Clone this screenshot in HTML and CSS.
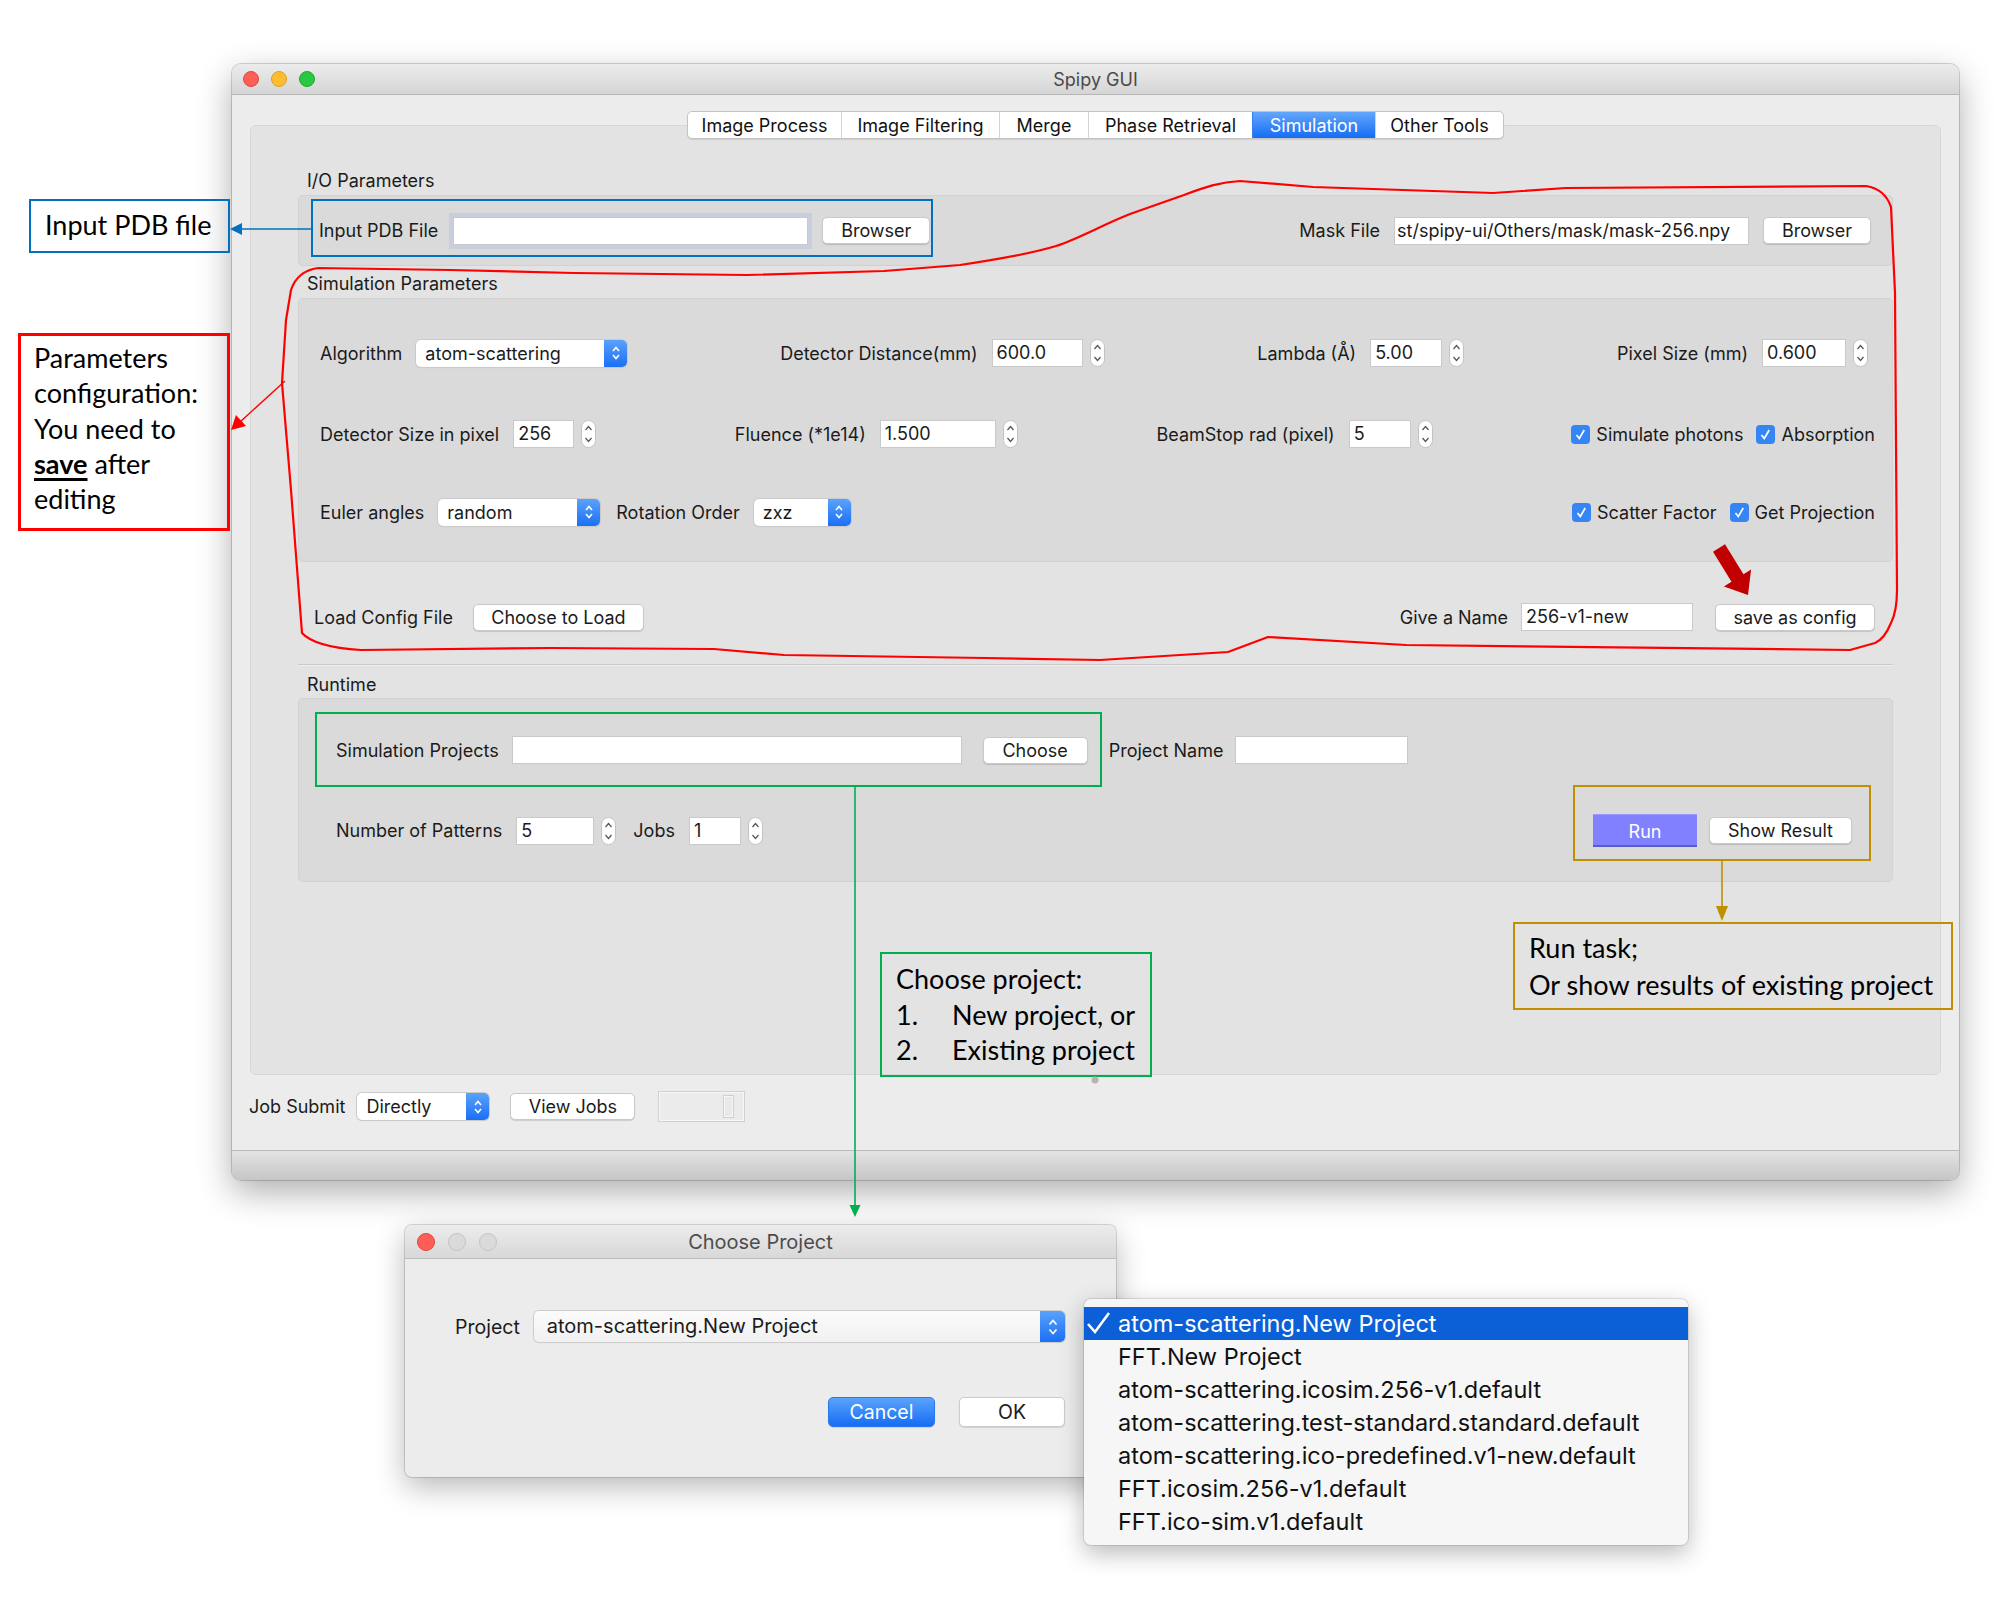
FILE: index.html
```html
<!DOCTYPE html>
<html>
<head>
<meta charset="utf-8">
<title>Spipy GUI</title>
<link rel="stylesheet" href="styles.css">
</head>
<body>

<div class="win main-win">
  <div class="titlebar">
    <div class="lights"><span class="light red"></span><span class="light yellow"></span><span class="light green"></span></div>
    <div class="win-title">Spipy GUI</div>
    <div></div>
  </div>
  <div class="win-body">
    <div class="tabs">
      <div class="tab t1">Image Process</div>
      <div class="tab t2">Image Filtering</div>
      <div class="tab t3">Merge</div>
      <div class="tab t4">Phase Retrieval</div>
      <div class="tab t5 active">Simulation</div>
      <div class="tab t6">Other Tools</div>
    </div>
    <div class="panel">
      <div class="sec-title">I/O Parameters</div>
      <div class="group io-group">
        <div class="hbox">
          <span class="lbl">Input PDB File</span>
          <div class="field focus w-pdb"></div>
          <div class="btn w-browse">Browser</div>
        </div>
        <div class="hbox">
          <span class="lbl">Mask File</span>
          <div class="field w-mask">st/spipy-ui/Others/mask/mask-256.npy</div>
          <div class="btn w-browse">Browser</div>
        </div>
      </div>

      <div class="sec-title">Simulation Parameters</div>
      <div class="group sim-group">
        <div class="srow r1">
          <div class="hbox">
            <span class="lbl">Algorithm</span>
            <div class="combo w-alg"><span class="combo-text">atom-scattering</span><span class="combo-arrow"><svg width="10" height="18" viewBox="0 0 10 18"><path d="M2 7 L5 3.5 L8 7 M2 11 L5 14.5 L8 11" fill="none" stroke="#fff" stroke-width="1.6"/></svg></span></div>
          </div>
          <div class="hbox">
            <span class="lbl">Detector Distance(mm)</span>
            <div class="spin"><div class="field w-dd">600.0</div><svg class="spin-arr" width="15" height="28" viewBox="0 0 15 28"><rect x="0.5" y="0.5" width="14" height="27" rx="7" fill="#fff" stroke="#c2c2c2"/><path d="M4.5 10 L7.5 6.5 L10.5 10 M4.5 18 L7.5 21.5 L10.5 18" fill="none" stroke="#555" stroke-width="1.2"/></svg></div>
          </div>
          <div class="hbox">
            <span class="lbl">Lambda (Å)</span>
            <div class="spin"><div class="field w-lam">5.00</div><svg class="spin-arr" width="15" height="28" viewBox="0 0 15 28"><rect x="0.5" y="0.5" width="14" height="27" rx="7" fill="#fff" stroke="#c2c2c2"/><path d="M4.5 10 L7.5 6.5 L10.5 10 M4.5 18 L7.5 21.5 L10.5 18" fill="none" stroke="#555" stroke-width="1.2"/></svg></div>
          </div>
          <div class="hbox">
            <span class="lbl">Pixel Size (mm)</span>
            <div class="spin"><div class="field w-px">0.600</div><svg class="spin-arr" width="15" height="28" viewBox="0 0 15 28"><rect x="0.5" y="0.5" width="14" height="27" rx="7" fill="#fff" stroke="#c2c2c2"/><path d="M4.5 10 L7.5 6.5 L10.5 10 M4.5 18 L7.5 21.5 L10.5 18" fill="none" stroke="#555" stroke-width="1.2"/></svg></div>
          </div>
        </div>

        <div class="srow r2">
          <div class="hbox">
            <span class="lbl">Detector Size in pixel</span>
            <div class="spin"><div class="field w-ds">256</div><svg class="spin-arr" width="15" height="28" viewBox="0 0 15 28"><rect x="0.5" y="0.5" width="14" height="27" rx="7" fill="#fff" stroke="#c2c2c2"/><path d="M4.5 10 L7.5 6.5 L10.5 10 M4.5 18 L7.5 21.5 L10.5 18" fill="none" stroke="#555" stroke-width="1.2"/></svg></div>
          </div>
          <div class="hbox">
            <span class="lbl">Fluence (*1e14)</span>
            <div class="spin"><div class="field w-fl">1.500</div><svg class="spin-arr" width="15" height="28" viewBox="0 0 15 28"><rect x="0.5" y="0.5" width="14" height="27" rx="7" fill="#fff" stroke="#c2c2c2"/><path d="M4.5 10 L7.5 6.5 L10.5 10 M4.5 18 L7.5 21.5 L10.5 18" fill="none" stroke="#555" stroke-width="1.2"/></svg></div>
          </div>
          <div class="hbox">
            <span class="lbl">BeamStop rad (pixel)</span>
            <div class="spin"><div class="field w-bs">5</div><svg class="spin-arr" width="15" height="28" viewBox="0 0 15 28"><rect x="0.5" y="0.5" width="14" height="27" rx="7" fill="#fff" stroke="#c2c2c2"/><path d="M4.5 10 L7.5 6.5 L10.5 10 M4.5 18 L7.5 21.5 L10.5 18" fill="none" stroke="#555" stroke-width="1.2"/></svg></div>
          </div>
          <div class="checks">
            <div class="check"><svg width="19" height="19" viewBox="0 0 19 19"><rect width="19" height="19" rx="4" fill="#3585f5"/><path d="M5.5 10 L8.3 13.5 L13.2 5" fill="none" stroke="#fff" stroke-width="1.7"/></svg><span>Simulate photons</span></div>
            <div class="check"><svg width="19" height="19" viewBox="0 0 19 19"><rect width="19" height="19" rx="4" fill="#3585f5"/><path d="M5.5 10 L8.3 13.5 L13.2 5" fill="none" stroke="#fff" stroke-width="1.7"/></svg><span>Absorption</span></div>
          </div>
        </div>

        <div class="srow r3">
          <div class="hbox">
            <span class="lbl">Euler angles</span>
            <div class="combo w-eul"><span class="combo-text">random</span><span class="combo-arrow"><svg width="10" height="18" viewBox="0 0 10 18"><path d="M2 7 L5 3.5 L8 7 M2 11 L5 14.5 L8 11" fill="none" stroke="#fff" stroke-width="1.6"/></svg></span></div>
            <span class="lbl ml-rot">Rotation Order</span>
            <div class="combo w-rot"><span class="combo-text">zxz</span><span class="combo-arrow"><svg width="10" height="18" viewBox="0 0 10 18"><path d="M2 7 L5 3.5 L8 7 M2 11 L5 14.5 L8 11" fill="none" stroke="#fff" stroke-width="1.6"/></svg></span></div>
          </div>
          <div class="checks">
            <div class="check"><svg width="19" height="19" viewBox="0 0 19 19"><rect width="19" height="19" rx="4" fill="#3585f5"/><path d="M5.5 10 L8.3 13.5 L13.2 5" fill="none" stroke="#fff" stroke-width="1.7"/></svg><span>Scatter Factor</span></div>
            <div class="check"><svg width="19" height="19" viewBox="0 0 19 19"><rect width="19" height="19" rx="4" fill="#3585f5"/><path d="M5.5 10 L8.3 13.5 L13.2 5" fill="none" stroke="#fff" stroke-width="1.7"/></svg><span>Get Projection</span></div>
          </div>
        </div>
      </div>

      <div class="load-row">
        <div class="hbox">
          <span class="lbl">Load Config File</span>
          <div class="btn w-load">Choose to Load</div>
        </div>
        <div class="hbox">
          <span class="lbl">Give a Name</span>
          <div class="field w-name">256-v1-new</div>
          <div class="btn w-save">save as config</div>
        </div>
      </div>

      <div class="separator"></div>

      <div class="sec-title rt-title">Runtime</div>
      <div class="group rt-group">
        <div class="rt-row">
          <span class="lbl">Simulation Projects</span>
          <div class="field w-proj"></div>
          <div class="btn w-choose">Choose</div>
          <span class="lbl ml-pn">Project Name</span>
          <div class="field w-pname"></div>
        </div>
        <div class="rt-row rt-row2">
          <span class="lbl">Number of Patterns</span>
          <div class="spin"><div class="field w-np">5</div><svg class="spin-arr" width="15" height="28" viewBox="0 0 15 28"><rect x="0.5" y="0.5" width="14" height="27" rx="7" fill="#fff" stroke="#c2c2c2"/><path d="M4.5 10 L7.5 6.5 L10.5 10 M4.5 18 L7.5 21.5 L10.5 18" fill="none" stroke="#555" stroke-width="1.2"/></svg></div>
          <span class="lbl ml-jobs">Jobs</span>
          <div class="spin"><div class="field w-jobs">1</div><svg class="spin-arr" width="15" height="28" viewBox="0 0 15 28"><rect x="0.5" y="0.5" width="14" height="27" rx="7" fill="#fff" stroke="#c2c2c2"/><path d="M4.5 10 L7.5 6.5 L10.5 10 M4.5 18 L7.5 21.5 L10.5 18" fill="none" stroke="#555" stroke-width="1.2"/></svg></div>
          <div class="run-box">
            <div class="btn-run">Run</div>
            <div class="btn w-show">Show Result</div>
          </div>
        </div>
      </div>
    </div>

    <div class="bottom-row">
      <span class="lbl">Job Submit</span>
      <div class="combo w-dir"><span class="combo-text">Directly</span><span class="combo-arrow"><svg width="10" height="18" viewBox="0 0 10 18"><path d="M2 7 L5 3.5 L8 7 M2 11 L5 14.5 L8 11" fill="none" stroke="#fff" stroke-width="1.6"/></svg></span></div>
      <div class="btn w-view">View Jobs</div>
      <div class="slider"><span class="slider-handle"></span></div>
    </div>
  </div>
  <div class="statusbar"></div>
</div>

<div class="win dialog">
  <div class="dlg-titlebar">
    <div class="dlg-lights"><span class="dlight dred"></span><span class="dlight"></span><span class="dlight"></span></div>
    <div class="dlg-title">Choose Project</div>
    <div></div>
  </div>
  <div class="dlg-body">
    <div class="dlg-row">
      <span class="dlg-lbl">Project</span>
      <div class="dcombo"><span class="dcombo-text">atom-scattering.New Project</span><span class="dcombo-arrow"><svg width="12" height="22" viewBox="0 0 12 22"><path d="M2.5 8.5 L6 4.5 L9.5 8.5 M2.5 13.5 L6 17.5 L9.5 13.5" fill="none" stroke="#fff" stroke-width="1.7"/></svg></span></div>
    </div>
    <div class="dlg-buttons">
      <div class="dbtn cancel">Cancel</div>
      <div class="dbtn">OK</div>
    </div>
  </div>
</div>

<div class="popup">
  <div class="pitem sel"><svg class="pcheck" width="26" height="33" viewBox="0 0 26 33"><path d="M3 17 L10 25 L24 6" fill="none" stroke="#fff" stroke-width="2.6"/></svg>atom-scattering.New Project</div>
  <div class="pitem">FFT.New Project</div>
  <div class="pitem">atom-scattering.icosim.256-v1.default</div>
  <div class="pitem">atom-scattering.test-standard.standard.default</div>
  <div class="pitem">atom-scattering.ico-predefined.v1-new.default</div>
  <div class="pitem">FFT.icosim.256-v1.default</div>
  <div class="pitem">FFT.ico-sim.v1.default</div>
</div>

<!-- annotations -->
<div class="hl hl-blue"></div>
<div class="hl hl-green"></div>
<div class="hl hl-gold"></div>

<div class="note note-blue">Input PDB file</div>
<div class="note note-red">Parameters<br>configuration:<br>You need to<br><b class="save">save</b> after<br>editing</div>
<div class="note note-green">
  <div>Choose project:</div>
  <div class="li"><span class="num">1.</span>New project, or</div>
  <div class="li"><span class="num">2.</span>Existing project</div>
</div>
<div class="note note-gold">Run task;<br>Or show results of existing project</div>

<svg class="overlay" width="2000" height="1615" viewBox="0 0 2000 1615">
  <path d="M291 290 C295 278 304 270 318 268 L450 270 L574 273 L747 275 L884 271 L960 265 C1000 259 1030 254 1056 246 C1080 238 1100 226 1130 214 L1184 195 C1205 187 1220 182 1240 181 L1313 187 L1493 193 L1566 188 L1866 186 C1878 188 1887 195 1891 207 L1895 293 L1897 590 C1897 605 1895 615 1891 623 C1886 635 1880 641 1875 643 L1850 650 L1406 645 L1268 637 L1228 652 L1100 660 L985 658 L784 655 L714 649 L551 648 L361 650 C330 648 310 642 302 633 L291 490 L282 383 L286 320 Z" fill="none" stroke="#ff0000" stroke-width="2.2" stroke-linejoin="round"/>
  <line x1="285" y1="381" x2="240" y2="422" stroke="#ff0000" stroke-width="1.4"/>
  <polygon points="231,430 236,415 246,426" fill="#ff0000"/>
  <line x1="312" y1="229" x2="240" y2="229" stroke="#0070c0" stroke-width="1.6"/>
  <polygon points="230,229 242,223 242,235" fill="#0070c0"/>
  <line x1="855" y1="786" x2="855" y2="1206" stroke="#00b050" stroke-width="1.6"/>
  <polygon points="855,1217 849.5,1205 860.5,1205" fill="#00b050"/>
  <line x1="1722" y1="860" x2="1722" y2="908" stroke="#bf9000" stroke-width="1.6"/>
  <polygon points="1722,921 1716,906 1728,906" fill="#bf9000"/>
  <polygon points="1725,544.3 1743.5,574.3 1751.1,569.6 1748,595 1723.9,586.4 1731.5,581.7 1713,551.7" fill="#c00000"/>
  <circle cx="1095" cy="1080" r="3.5" fill="#b4b4b4"/>
</svg>

</body>
</html>
```

FILE: styles.css
```css
* { box-sizing: border-box; }
html, body { margin: 0; padding: 0; }
body {
  width: 2000px;
  height: 1615px;
  background: #ffffff;
  position: relative;
  overflow: hidden;
  font-family: Inter, "Liberation Sans", Arial, sans-serif;
  font-size: 18px;
  color: #1b1b1b;
}
svg { display: block; flex: none; }

/* ---------- windows ---------- */
.win { position: absolute; background: #ececec; overflow: hidden; }
.main-win {
  left: 232px; top: 64px; width: 1727px; height: 1116px;
  border-radius: 9px;
  display: flex; flex-direction: column;
  box-shadow: 0 12px 34px rgba(0,0,0,.32), 0 0 0 1px rgba(0,0,0,.16);
}
.titlebar {
  flex: none; height: 31px;
  display: grid; grid-template-columns: 1fr auto 1fr; align-items: center;
  background: linear-gradient(#ececec, #d5d5d5);
  border-bottom: 1px solid #b7b7b7;
}
.lights { display: flex; gap: 12px; padding-left: 11px; }
.light { width: 16px; height: 16px; border-radius: 50%; }
.red { background: #fd5f57; border: 1px solid #e0463e; }
.yellow { background: #febc2e; border: 1px solid #dca022; }
.green { background: #29c840; border: 1px solid #1aab29; }
.win-title { color: #4a4a4a; font-size: 18px; }

.win-body { flex: 1; display: flex; flex-direction: column; padding: 16px 18px 0; }

.tabs {
  align-self: center; display: flex; height: 28px;
  position: relative; z-index: 1;
  background: #fff; border: 1px solid #c4c4c4; border-radius: 5px;
  box-shadow: 0 1px 1px rgba(0,0,0,.1);
  overflow: hidden;
}
.tab { display: flex; align-items: center; justify-content: center; font-size: 18px; border-left: 1px solid #d4d4d4; color: #111; }
.tab:first-child { border-left: none; }
.t1 { width: 153px; }
.t2 { width: 158px; }
.t3 { width: 89px; }
.t4 { width: 164px; }
.t5 { width: 123px; }
.t6 { width: 128px; }
.tab.active { background: linear-gradient(#63a6fb, #156df5); color: #fff; border-left-color: #3a82ef; }

.panel {
  margin-top: -14px; height: 950px; flex: none;
  background: #e3e3e3; border: 1px solid #d7d7d7; border-radius: 6px;
  padding: 37px 47px 0 47px;
  display: flex; flex-direction: column;
}
.sec-title { height: 22px; line-height: 22px; margin: 7px 0 3px 9px; }
.group { background: #dadada; border: 1px solid #d2d2d2; border-radius: 5px; }

.hbox { display: flex; align-items: center; gap: 14px; }
.lbl { white-space: nowrap; }

.field {
  background: #fff; height: 28px; line-height: 26px;
  border: 1px solid #c9c9c9; padding: 0 4px;
  white-space: nowrap; overflow: hidden;
}
.field.focus { box-shadow: 0 0 0 4px #c7cfdc; }
.btn {
  height: 27px; background: #fff; border-radius: 5px;
  border: 1px solid #c9c9c9; box-shadow: 0 1px 1px rgba(0,0,0,.14);
  display: flex; align-items: center; justify-content: center;
  white-space: nowrap;
}

/* I/O */
.io-group { height: 71px; display: flex; align-items: center; justify-content: space-between; padding: 0 21px 0 20px; }
.w-pdb { width: 355px; margin-left: 1px; }
.w-mask { width: 355px; padding-left: 2px; }
.w-browse { width: 108px; }

/* combo */
.combo {
  display: flex; height: 27px; background: #fff; border-radius: 5px;
  box-shadow: 0 0 0 1px #cacaca, 0 1px 1px rgba(0,0,0,.12);
  overflow: hidden;
}
.combo-text { flex: 1; padding-left: 9px; line-height: 27px; white-space: nowrap; }
.combo-arrow {
  width: 23px; display: flex; align-items: center; justify-content: center;
  background: linear-gradient(#5aa2fb, #1a6ff5);
}
.w-alg { width: 211px; }
.w-eul { width: 162px; }
.w-rot { width: 97px; }
.w-dir { width: 132px; }
.ml-rot { margin-left: 2px; }

/* spin */
.spin { display: flex; align-items: center; gap: 7px; }
.w-dd { width: 91px; }
.w-lam { width: 72px; }
.w-px { width: 84px; }
.w-ds { width: 61px; }
.w-fl { width: 116px; }
.w-bs { width: 62px; }
.w-np { width: 78px; }
.w-jobs { width: 52px; }

/* sim group */
.sim-group { height: 264px; display: flex; flex-direction: column; }
.srow { height: 28px; display: flex; align-items: center; justify-content: space-between; }
.r1 { margin-top: 40px; padding: 0 24px 0 21px; }
.r2 { margin-top: 53px; padding: 0 17px 0 21px; }
.r3 { margin-top: 50px; padding: 0 17px 0 21px; }
.checks { display: flex; align-items: center; gap: 13px; }
.check { display: flex; align-items: center; gap: 6px; white-space: nowrap; }

/* load row */
.load-row { height: 28px; margin-top: 41px; display: flex; align-items: center; justify-content: space-between; padding: 0 18px 0 16px; }
.load-row .hbox { gap: 20px; }
.load-row .hbox + .hbox { gap: 13px; }
.w-load { width: 171px; }
.w-name { width: 172px; }
.w-save { width: 160px; margin-left: 9px; }

.separator { height: 1px; background: #cacaca; margin-top: 33px; box-shadow: 0 1px 0 #eeeeee; }
.rt-title { margin-top: 9px; margin-bottom: 2px; }

/* runtime */
.rt-group { height: 184px; padding: 37px 40px 0 37px; display: flex; flex-direction: column; }
.rt-row { height: 28px; display: flex; align-items: center; gap: 13px; }
.rt-row2 { height: 33px; margin-top: 50px; gap: 14px; }
.w-proj { width: 450px; }
.w-choose { width: 105px; margin-left: 8px; }
.ml-pn { margin-left: 8px; }
.w-pname { width: 173px; margin-left: -1px; }
.ml-jobs { margin-left: 3px; }
.run-box { margin-left: auto; display: flex; align-items: center; gap: 12px; }
.btn-run {
  width: 104px; height: 33px; background: #8181ff; color: #fff;
  border-bottom: 2px solid #5b5bd0; border-top: 1px solid #9a9aff;
  display: flex; align-items: center; justify-content: center; padding-top: 3px;
}
.w-show { width: 143px; }

/* bottom row */
.bottom-row { height: 31px; margin-top: 16px; display: flex; align-items: center; }
.bottom-row .lbl { margin-left: -1px; }
.bottom-row .combo { margin-left: 12px; }
.w-view { width: 125px; margin-left: 21px; }
.slider {
  width: 87px; height: 31px; margin-left: 23px;
  border: 1px solid #d0d0d0; box-shadow: inset 0 0 0 1px #f7f7f7;
  background: #ebebeb; display: flex; justify-content: flex-end; padding: 3px 10px 3px 0;
}
.slider-handle { width: 11px; border: 1px solid #cfcfcf; box-shadow: inset 0 0 0 1px #f7f7f7; background: #e9e9e9; }

.statusbar { flex: none; height: 30px; border-top: 1px solid #b9b9b9; background: linear-gradient(#e3e3e3, #c6c6c6); }

/* ---------- dialog ---------- */
.dialog {
  left: 405px; top: 1225px; width: 711px; height: 252px; border-radius: 7px;
  box-shadow: 0 10px 30px rgba(0,0,0,.28), 0 0 0 1px rgba(0,0,0,.14);
  display: flex; flex-direction: column;
}
.dlg-titlebar {
  height: 34px; flex: none;
  display: grid; grid-template-columns: 1fr auto 1fr; align-items: center;
  background: linear-gradient(#ececec, #d8d8d8);
  border-bottom: 1px solid #bdbdbd;
}
.dlg-lights { display: flex; gap: 13px; padding-left: 12px; }
.dlight { width: 18px; height: 18px; border-radius: 50%; background: #dadada; border: 1px solid #c3c3c3; }
.dlight.dred { background: #fd5f57; border-color: #e0463e; }
.dlg-title { font-size: 20px; color: #4d4d4d; }
.dlg-body { flex: 1; padding: 52px 51px 0 50px; display: flex; flex-direction: column; }
.dlg-row { display: flex; align-items: center; gap: 14px; height: 31px; }
.dlg-lbl { font-size: 19.5px; }
.dcombo {
  flex: 1; height: 31px; display: flex; border-radius: 5px; overflow: hidden;
  background: linear-gradient(#fbfbfb, #f1f1f1);
  box-shadow: 0 0 0 1px #cdcdcd, 0 1px 1px rgba(0,0,0,.1);
}
.dcombo-text { flex: 1; padding-left: 13px; line-height: 31px; font-size: 20px; }
.dcombo-arrow { width: 25px; display: flex; align-items: center; justify-content: center; background: linear-gradient(#5aa2fb, #1a6ff5); }
.dlg-buttons { display: flex; justify-content: flex-end; gap: 24px; margin-top: 55px; }
.dbtn {
  width: 106px; height: 30px; border-radius: 5px; background: #fff;
  border: 1px solid #cbcbcb; box-shadow: 0 1px 1px rgba(0,0,0,.12);
  display: flex; align-items: center; justify-content: center; font-size: 19.5px;
}
.dbtn.cancel { width: 107px; background: linear-gradient(#5aa3fb, #166df5); color: #fff; border-color: #2a78ee; }

/* ---------- popup ---------- */
.popup {
  position: absolute; left: 1084px; top: 1299px; width: 604px; height: 246px;
  background: #f6f6f6; border-radius: 7px; padding: 8px 0;
  box-shadow: 0 8px 24px rgba(0,0,0,.28), 0 0 0 1px rgba(0,0,0,.1);
}
.pitem { position: relative; height: 33px; line-height: 33px; padding-left: 34px; font-size: 23.5px; color: #111; white-space: nowrap; }
.pitem.sel { background: #0b5fd7; color: #fff; }
.pcheck { position: absolute; left: 1px; top: 0; }

/* ---------- annotations ---------- */
.hl { position: absolute; pointer-events: none; }
.hl-blue { left: 311px; top: 199px; width: 622px; height: 58px; border: 2.5px solid #0070c0; }
.hl-green { left: 315px; top: 712px; width: 787px; height: 75px; border: 2.5px solid #00b050; }
.hl-gold { left: 1573px; top: 785px; width: 298px; height: 76px; border: 2.5px solid #bf9000; }

.note { position: absolute; font-family: Lato, "Open Sans", sans-serif; font-size: 27px; color: #000; }
.note-blue {
  left: 29px; top: 199px; width: 201px; height: 54px;
  border: 2.5px solid #0070c0; padding-left: 14px; line-height: 48px;
}
.note-red {
  left: 18px; top: 333px; width: 212px; height: 198px;
  border: 3px solid #ff0000; padding: 4px 0 0 13px; line-height: 35.3px;
}
.save { font-weight: 700; text-decoration: underline; text-decoration-thickness: 3px; text-underline-offset: 4px; }
.note-green {
  left: 880px; top: 952px; width: 272px; height: 125px;
  border: 2.5px solid #00b050; padding: 7px 0 0 14px; line-height: 35.5px;
}
.li { display: flex; }
.num { width: 56px; flex: none; }
.note-gold {
  left: 1513px; top: 922px; width: 440px; height: 88px;
  border: 2.5px solid #bf9000; padding: 5px 0 0 14px; line-height: 37px;
}

.overlay { position: absolute; left: 0; top: 0; pointer-events: none; }
```
